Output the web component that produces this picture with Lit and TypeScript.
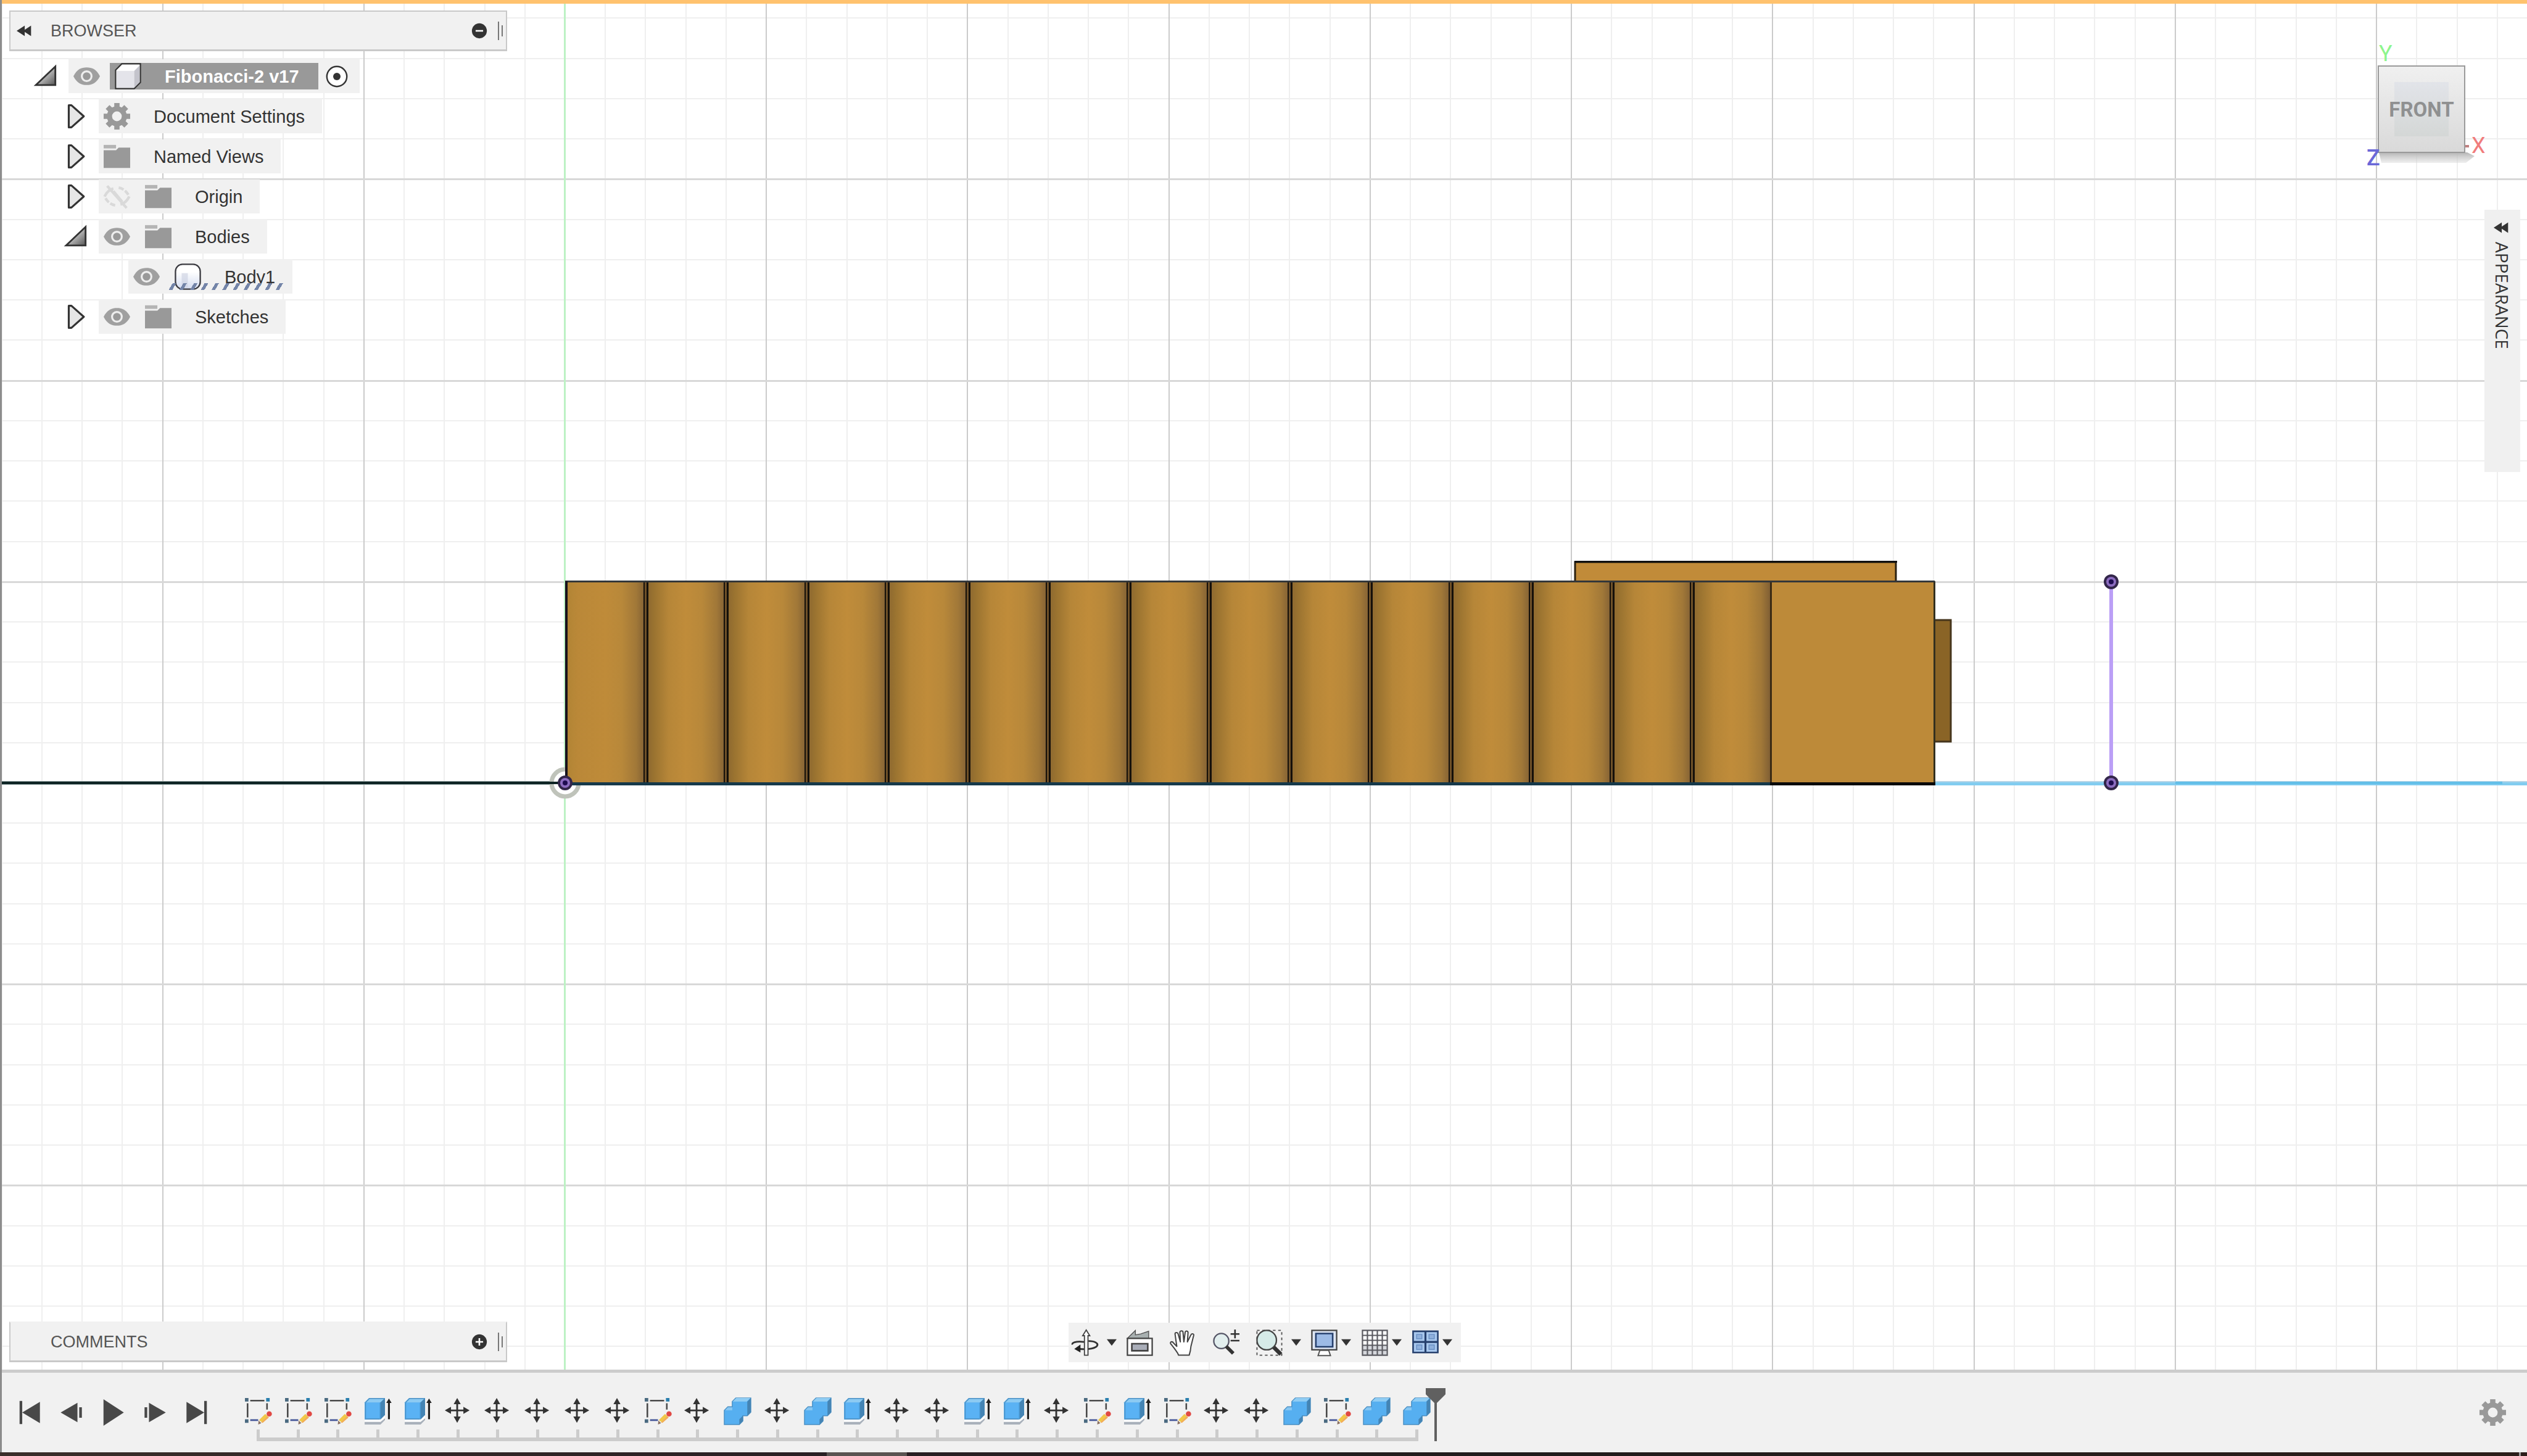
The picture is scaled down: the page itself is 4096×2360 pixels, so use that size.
import { LitElement, html, svg, css, nothing } from "lit";
import { customElement, state } from "lit/decorators.js";

type Glyph = ReturnType<typeof svg>;

/* ---------- icon artwork, drawn on a 30 x 30 board ---------- */

const gear = svg`
  <path fill="#999" fill-rule="evenodd" d="M12 0h6v4l2.500 1 2.800-2.800 4.400 4.400L24.900 9.500l1 2.500H30v6h-4l-1.100 2.500 2.800 2.900-4.300 4.300-2.900-2.800L18 26v4h-6v-4l-2.500-1.100-2.900 2.800-4.300-4.300 2.800-2.900L4 18H0v-6h4l1.100-2.500L2.300 6.600l4.300-4.300L9.500 5 12 4zM15 9.500a5.500 5.500 0 1 0 0 11 5.500 5.500 0 0 0 0-11z"/>`;

const folder = svg`
  <path fill="#b4b4b4" d="M0 2h14v4H0z"/>
  <path fill="#999" d="M0 8h14l3-3h13v23H0z"/>`;

const eye = svg`
  <path fill="#a0a0a0" d="M0 15C4 7 9 5 15 5s11 2 15 10c-4 8-9 10-15 10S4 23 0 15z"/>
  <circle cx="15" cy="15" r="5.500" fill="#999" stroke="#eee" stroke-width="2.200"/>`;

const eyeOff = svg`
  <g fill="none" stroke="#d9d9d9" stroke-width="3">
    <path d="M1 15c3-6 6-8 10-9M29 15c-3 6-6 8-10 9"/>
    <path d="M17 5c5 1 9 4 12 10M13 25C8 24 4 21 1 15" stroke-dasharray="6 2"/>
    <path d="M4 3l22 25M11 9l10 12"/>
  </g>`;

const component = svg`
  <path d="M1 8 8 1h21v21l-7 7H1z" fill="#fff" stroke="#333" stroke-width="1.500"/>
  <path d="M2 9h20v19H2z" fill="#e4e4ea"/>
  <path d="M22 9l6-6v19l-6 6z" fill="#c4c4cc"/>`;

const bodyIcon = svg`
  <defs><linearGradient id="bodyFill" x1="0" x2="0" y1="0" y2="1">
    <stop offset=".3" stop-color="#fff"/><stop offset="1" stop-color="#d4dcf0"/>
  </linearGradient></defs>
  <rect x="1" y="1" width="28" height="28" rx="8" fill="url(#bodyFill)" stroke="#3a3a40" stroke-width="1.600"/>
  <path d="M8 11h7v16H8z" fill="#c9cfdf" opacity=".6"/>`;

const triClosed = svg`<path d="M8 2.500h3L25 15 11 27.500H8z" fill="#e6e6e6" stroke="#333" stroke-width="2.200" stroke-linejoin="round"/>`;
const triOpen = svg`
  <defs><linearGradient id="tri" x1="0" x2="1" y1="0" y2="1">
    <stop offset=".3" stop-color="#ddd"/><stop offset="1" stop-color="#555"/>
  </linearGradient></defs>
  <path d="M27 4v21H5z" fill="url(#tri)" stroke="#333" stroke-width="2"/>`;

const rewind = svg`<path d="M0 15 14 6v7l11-7v18l-11-7v7z" fill="#333"/>`;
const minus = svg`<circle cx="15" cy="15" r="14" fill="#333"/><path d="M8 15h14" stroke="#fff" stroke-width="3"/>`;
const plus = svg`<circle cx="15" cy="15" r="14" fill="#333"/><path d="M8 15h14M15 8v14" stroke="#fff" stroke-width="3"/>`;
const radioOn = svg`<circle cx="15" cy="15" r="13.500" fill="#fff" stroke="#333" stroke-width="2"/><circle cx="15" cy="15" r="5" fill="#333"/>`;

const sketch = svg`
  <g fill="#4a6a80"><path d="M0 0h4v4H0zM0 24h4v4H0z"/><path fill="#2a7fae" d="M24 0h4v4h-4z"/></g>
  <path d="M6 3h16M3 6v16M25 6v7" stroke="#4a4a4a" stroke-width="1.800" fill="none"/>
  <path d="M6 25h9" stroke="#4a5a9a" stroke-width="2"/>
  <path d="M16 25l7-7 4 4-7 6z" fill="#f0c848"/>
  <path d="M20 28l7-6-1.500-1.500-7 7z" fill="#f2ab5c"/>
  <path d="M15.500 25.500l3 3-3.500 1.500z" fill="#8a7060"/>
  <circle cx="27.500" cy="18" r="3" fill="#e04a44"/>`;

const extrude = svg`
  <path d="M0 5 5 0h18v19l-5 5H0z" fill="#4a9cd8"/>
  <path d="M0 5h17v19H0z" fill="#5ab2f4"/>
  <path d="M0 5 5 0h18l-5 5z" fill="#8ccaf2"/>
  <path d="M18 5l5-5v19l-5 5z" fill="#4484b4"/>
  <path d="M1 5v18.500h16M1 5l4.500-4.500H22.500" fill="none" stroke="#4a90c4"/>
  <path d="M0 25h18l5-5v3l-5 4H0z" fill="#fff"/>
  <path d="M0 27h18l5-4v2l-5 5H0z" fill="#a9b1bb"/>
  <path d="M27.500 4v20" stroke="#222" stroke-width="2.200"/><path d="M24.500 5.500l3-5 3 5z" fill="#222"/>`;

const move = svg`
  <path d="M14 4v20M4 14h20" stroke="#333" stroke-width="2"/>
  <path fill="#333" d="M14 0l4 7h-8zM14 28l4-7h-8zM0 14l7-4v8zM28 14l-7-4v8z"/>`;

const combine = svg`
  <path d="M9 4l4-4h17v16l-4 4h-5v6l-4 4H0V14l4-4h5z" fill="#56aff0" stroke="#4a90c4"/>
  <path d="M9.500 4l4-4H29.500l-4 4z" fill="#90cdf4"/>
  <path d="M26 4l4-4v16l-4 4zM17 24l4-4v6l-4 4z" fill="#4484b4"/>
  <path d="M1 14l3-3.500h5V14z" fill="#86c6f2"/>`;

const skipStart = svg`<path d="M4 2h3v26H4zM27 3v24L7 15z" fill="#484848"/>`;
const stepBack = svg`<path d="M22 4v22L3 15zM24 9h3v12h-3z" fill="#484848"/>`;
const play = svg`<path d="M4 0v30l23-15z" fill="#484848"/>`;
const stepForward = svg`<path d="M8 4v22l19-11zM3 9h3v12H3z" fill="#484848"/>`;
const skipEnd = svg`<path d="M23 2h3v26h-3zM3 3v24l20-12z" fill="#484848"/>`;

const orbit = svg`
  <path d="M14 14C4 13 0 15 1 17M19 13c8 0 11 3 10 5-1 3-10 5-20 4" fill="none" stroke="#333" stroke-width="2"/>
  <path d="M3 22l7-5v9z" fill="#222"/>
  <path d="M14.500 7v22h4V7h2l-4-6.500L12.500 7z" fill="#fff" stroke="#444" stroke-width="1.300"/>`;

const lookAt = svg`
  <path d="M1 10 10 1v5l6-1 9-3v8z" fill="#a8b0b0" stroke="#555"/>
  <path d="M1 10h28v19H1z" fill="#fff" stroke="#444" stroke-width="1.600"/>
  <path d="M6 16h18v8H6z" fill="#a9adb8" stroke="#444" stroke-width="1.800"/>`;

const hand = svg`
  <path d="M10 29c-1-3-3-5-5-8L1 16c-1-2 2-3 3-1l4 4L6 5c0-2 3-2 3.500 0L12 14 11.500 3c0-2 3.500-2 3.500 0l1 11 1.500-11c.3-2 3.300-1.500 3.200.5L20 14l4-8c1-2 4-1 3 1l-3 12c-.3 4-1 7-2 10z" fill="#fff" stroke="#444" stroke-width="1.400" stroke-linejoin="round"/>`;

const zoom = svg`
  <circle cx="9.500" cy="13" r="8.500" fill="#e2eeee" stroke="#556" stroke-width="1.600"/>
  <path d="M15 19l8 8" stroke="#333" stroke-width="4"/>
  <path d="M25 0v10M20 5h10M20 12.500h10" stroke="#333" stroke-width="1.800"/>`;

const fit = svg`
  <path d="M1 1h28v28H1z" fill="none" stroke="#555" stroke-width="1.300" stroke-dasharray="3 3"/>
  <circle cx="12" cy="12" r="11" fill="#d6ebe8" stroke="#444" stroke-width="1.600"/>
  <path d="M20 20l8 8" stroke="#333" stroke-width="4.500"/>`;

const display = svg`
  <path d="M1 1h28v22H1z" fill="#dfe7f4" stroke="#444" stroke-width="1.600"/>
  <path d="M5.500 4.500h19v15h-19z" fill="#9dbbe6" stroke="#26406e" stroke-width="1.800"/>
  <path d="M10 23.500h10l2 6H8z" fill="#fff" stroke="#555" stroke-width="1.400"/>`;

const gridIcon = svg`
  <path d="M1 1h28v28H1z" fill="#fff"/><path d="M1 18h28v11H1z" fill="#d5d7dc"/>
  <path d="M1 1h28v28H1zM6.600 1v28M12.200 1v28M17.800 1v28M23.400 1v28M1 6.600h28M1 12.200h28M1 17.800h28M1 23.400h28" fill="none" stroke="#5a5a60" stroke-width="1.500"/>`;

const viewports = svg`
  <path d="M1 2h28v24H1z" fill="#a9c8ee" stroke="#26406e" stroke-width="1.800"/>
  <path d="M15 2v24M1 14h28" stroke="#26406e" stroke-width="2.200"/>
  <path d="M5 5.500h6v5H5zM19 5.500h6v5h-6zM5 17.500h6v5H5zM19 17.500h6v5h-6z" fill="#8fb0dc" stroke="#6a90c4"/>`;

const caret = svg`<path d="M0 5h30L15 25z" fill="#333"/>`;

const icon = (art: Glyph, cls = "icon") =>
  html`<svg class=${cls} viewBox="0 0 30 30" aria-hidden="true">${art}</svg>`;

/* ---------- data ---------- */

interface Node {
  label: string;
  level: number;
  toggle?: "open" | "closed";
  eye?: "on" | "off";
  art: Glyph;
  root?: boolean;
  hatched?: boolean;
}

const TREE: Node[] = [
  { label: "Fibonacci-2 v17", level: 0, toggle: "open", eye: "on", art: component, root: true },
  { label: "Document Settings", level: 1, toggle: "closed", art: gear },
  { label: "Named Views", level: 1, toggle: "closed", art: folder },
  { label: "Origin", level: 1, toggle: "closed", eye: "off", art: folder },
  { label: "Bodies", level: 1, toggle: "open", eye: "on", art: folder },
  { label: "Body1", level: 2, eye: "on", art: bodyIcon, hatched: true },
  { label: "Sketches", level: 1, toggle: "closed", eye: "on", art: folder },
];

const FEATURES: Record<string, { name: string; art: Glyph }> = {
  S: { name: "Sketch", art: sketch },
  E: { name: "Extrude", art: extrude },
  M: { name: "Move", art: move },
  C: { name: "Combine", art: combine },
};
const HISTORY = [..."SSSEEMMMMMSMCMCEMMEEMSESMMCSCC"];

const PLAYBACK = [
  { name: "Go to start", art: skipStart },
  { name: "Step back", art: stepBack },
  { name: "Play", art: play },
  { name: "Step forward", art: stepForward },
  { name: "Go to end", art: skipEnd },
];

const NAVIGATION = [
  { name: "Orbit", art: orbit, menu: "far" },
  { name: "Look at", art: lookAt, menu: "" },
  { name: "Pan", art: hand, menu: "" },
  { name: "Zoom", art: zoom, menu: "" },
  { name: "Fit", art: fit, menu: "far" },
  { name: "Display settings", art: display, menu: "near" },
  { name: "Grid and snaps", art: gridIcon, menu: "near" },
  { name: "Viewports", art: viewports, menu: "near" },
];

/* ---------- modelling canvas ---------- */

@customElement("model-canvas")
export class ModelCanvas extends LitElement {
  static styles = css`
    :host { display: block; min-width: 0; min-height: 0; overflow: hidden; }
    .scene { display: block; width: 100%; height: 100%; }
  `;

  private gridLines() {
    const ox = 916, oy = 1269, step = 326.24 / 5;
    const out: Glyph[] = [];
    const majors: Glyph[] = [];
    for (let i = -14; i <= 48; i++) {
      const x = Math.round(ox + i * step);
      const major = i % 5 === 0;
      (major ? majors : out).push(
        svg`<rect x=${x - 1} y="0" width="2" height="2220" fill=${major ? "#cbcbcb" : "#efefef"}/>`);
    }
    for (let j = -19; j <= 14; j++) {
      const y = Math.round(oy + j * step);
      const major = j % 5 === 0;
      (major ? majors : out).push(
        svg`<rect x="0" y=${y - 1} width="4096" height=${major ? 3 : 2} fill=${major ? "#d8d8d8" : "#efefef"}/>`);
    }
    return [out, majors];
  }

  private ribs() {
    const out: Glyph[] = [];
    for (let k = 0; k < 15; k++) {
      const x = Math.round(916 + k * 130.5);
      const end = k === 14 ? 2870 : Math.round(916 + (k + 1) * 130.5);
      out.push(svg`<rect x=${x} y="943" width=${end - x} height="327" fill=${k ? "url(#rib)" : "url(#ribFirst)"}/>`);
    }
    for (let k = 1; k < 15; k++) {
      const x = Math.round(916 + k * 130.5);
      out.push(svg`<rect x=${x - 3} y="943" width="6" height="327" fill="#6e5028"/>
        <rect x=${x - 4} y="943" width="2" height="327" fill="#15100a"/>
        <rect x=${x + 1} y="943" width="3" height="327" fill="#15100a"/>`);
    }
    return out;
  }

  private point(x: number, y: number) {
    return svg`<circle cx=${x} cy=${y} r="12" fill="#33264a"/>
      <circle cx=${x} cy=${y} r="8" fill="#8c6cc0"/>
      <circle cx=${x} cy=${y} r="4" fill="#1e0c50"/>`;
  }

  render() {
    return html`<svg class="scene" viewBox="3 6 4093 2214" preserveAspectRatio="xMidYMid slice" role="img" aria-label="Front view of the model">
      <defs>
        <linearGradient id="rib">
          <stop offset="0" stop-color="#8a6630"/><stop offset=".1" stop-color="#9a7330"/>
          <stop offset=".28" stop-color="#b68638"/><stop offset=".5" stop-color="#c08c3a"/>
          <stop offset=".7" stop-color="#b8883a"/><stop offset=".88" stop-color="#a17838"/>
          <stop offset="1" stop-color="#7f5e34"/>
        </linearGradient>
        <linearGradient id="ribFirst">
          <stop offset="0" stop-color="#b08434"/><stop offset=".15" stop-color="#ba8838"/>
          <stop offset=".5" stop-color="#bf8b39"/><stop offset=".7" stop-color="#b8883a"/>
          <stop offset=".88" stop-color="#a17838"/><stop offset="1" stop-color="#7f5e34"/>
        </linearGradient>
      </defs>
      <rect width="4096" height="2220" fill="#fff"/>
      ${this.gridLines()}
      <rect x="914" y="0" width="3" height="2220" fill="#bdf2c4"/>
      <rect x="0" y="1266" width="916" height="6" fill="#8a9c9c"/>
      <rect x="3136" y="1266" width="960" height="7" fill="#b4d4e6"/>
      <rect x="3136" y="1268" width="960" height="5" fill="#82ccf0"/>
      <rect x="3526" y="1267" width="530" height="4" fill="#62bfe8"/>
      <circle cx="916" cy="1269" r="22" fill="#fff" stroke="#bfc3ba" stroke-width="7"/>
      <rect x="0" y="1267" width="916" height="4" fill="#0e2424"/>
      <rect x="2553" y="911" width="520" height="32" fill="#c18b39" stroke="#2a2010" stroke-width="3"/>
      <rect x="2552" y="909" width="523" height="3" fill="#111"/>
      <rect x="3135" y="1005" width="27" height="197" fill="#8a6426" stroke="#45351c" stroke-width="3"/>
      ${this.ribs()}
      <rect x="2870" y="943" width="266" height="327" fill="#bd8a39"/>
      <rect x="2869" y="943" width="3" height="327" fill="#3a2a14"/>
      <rect x="3134" y="942" width="3" height="330" fill="#33301f"/>
      <rect x="916" y="941" width="2220" height="3" fill="#33373a"/>
      <rect x="916" y="942" width="4" height="328" fill="#17121c"/>
      <rect x="916" y="1268" width="1954" height="5" fill="#16394a"/>
      <rect x="2869" y="1268" width="268" height="5" fill="#0a0a0a"/>
      <rect x="3419" y="942" width="6" height="327" fill="#bb9ff6"/>
      ${this.point(916, 1269)} ${this.point(3422, 943)} ${this.point(3422, 1269)}
    </svg>`;
  }
}

/* ---------- application ---------- */

@customElement("app-root")
export class AppRoot extends LitElement {
  @state() private selected = TREE[0].label;

  static styles = css`
    :host {
      display: block; height: 100vh; color: #333;
      font-family: "Liberation Sans", Arial, sans-serif; font-size: 29px; line-height: 32px;
    }
    * { box-sizing: border-box; }
    button { all: unset; box-sizing: border-box; display: flex; align-items: center; cursor: pointer; }
    .icon { display: block; flex: none; width: 43px; height: 43px; overflow: visible; }
    .shell { display: flex; flex-direction: column; height: 100%; border-left: 3px solid #8c8c8c; background: #f1f1f1; }

    .viewport { flex: 1; min-height: 0; display: grid; grid-template: minmax(0, 1fr) / minmax(0, 1fr); border-top: 6px solid #ffc26e; }
    .viewport > * { grid-area: 1 / 1; }
    .chrome { z-index: 1; display: grid; grid-template: 1fr auto / 1fr auto 1fr; padding: 11px 11px 12px 12px; pointer-events: none; }
    .chrome button { pointer-events: auto; }
    .left { grid-area: 1 / 1; }
    .right { grid-area: 1 / 3; display: flex; flex-direction: column; align-items: flex-end; }

    .panel { display: flex; align-items: center; width: 807px; height: 66px; padding: 0 5px 0 10px; background: #f1f1f1; border: 2px solid #c9c9c9; border-bottom-width: 3px; font-size: 27px; color: #555; }
    .panel.flat { border-top-color: #f1f1f1; align-self: end; grid-area: 2 / 1; }
    .panel .name { flex: 1; margin: 0; font-size: 27px; font-weight: 400; }
    .lead { width: 55px; }
    .small { width: 28px; height: 28px; }
    .round { display: block; width: 26px; height: 26px; margin-right: 17px; }
    .grip { width: 8px; height: 30px; border-left: 2px solid #777; display: flex; align-items: center; justify-content: flex-end; }
    .grip::after { content: ""; width: 2px; height: 18px; background: #777; }

    .tree { list-style: none; margin: 0; padding: 13px 0 0 35px; display: flex; flex-direction: column; gap: 10px; }
    .row { display: flex; align-items: center; height: 55px; }
    .level1 { padding-left: 49px; }
    .level2 { padding-left: 97px; }
    .toggle { width: 61px; flex: none; padding-left: 1px; }
    .arrow { display: block; width: 43px; height: 43px; }
    .chip { display: flex; align-items: center; height: 55px; background: #f1f1f1; }
    .eye { padding-left: 8px; margin-right: 16px; }
    .entry { height: 43px; padding: 0 28px 0 8px; gap: 38px; white-space: nowrap; }
    .root .entry { background: #999; color: #fff; font-weight: 700; padding-right: 31px; }
    .activate { padding: 0 19px 0 12px; }
    .dot { display: block; width: 36px; height: 36px; }
    .hatched .entry { position: relative; }
    .hatched .entry::after {
      content: ""; position: absolute; left: -2px; right: 10px; bottom: 0; height: 11px;
      background: repeating-linear-gradient(-60deg, transparent 0 10px, #7384a8 10px 15px);
    }

    .cube { display: block; width: 210px; height: 240px; margin: 23px 53px 0 0; }
    .cube svg { display: block; width: 100%; height: 100%; }
    .cube text { font-family: Roboto, "Liberation Sans", sans-serif; }
    .drawer { display: flex; flex-direction: column; align-items: center; width: 58px; height: 425px; margin-top: 60px; padding-top: 15px; gap: 9px; background: #f0f0f0; font-family: "Open Sans", sans-serif; font-size: 28px; line-height: 32px; }
    .drawer .text { writing-mode: vertical-rl; }

    .nav { grid-area: 2 / 2; align-self: end; display: flex; align-items: center; gap: 27px; height: 64px; padding: 0 14px 0 5px; background: #f1f1f1; }
    .far { gap: 14px; margin-right: -11px; }
    .near { gap: 6px; margin-right: -10px; }
    .near:last-child { margin-right: 0; }
    .caret { display: block; width: 16px; height: 16px; }

    .timeline { display: flex; align-items: center; height: 134px; flex: none; border-top: 5px solid #ccc; padding: 0 34px 0 23px; }
    .playback { display: flex; gap: 25px; }
    .track { position: relative; align-self: flex-start; width: 1943px; margin: 41px 0 0 45px; }
    .steps { display: grid; grid-template-columns: repeat(30, 1fr); list-style: none; margin: 0; padding: 0; }
    .step { display: flex; flex-direction: column; align-items: center; gap: 8px; }
    .step::after { content: ""; width: 5px; height: 13px; background: #ccc; }
    .rail { height: 6px; margin: 0 30px; background: #ccc; }
    .marker { position: absolute; right: -14px; top: -16px; width: 32px; height: 86px; }
    .settings { margin-left: auto; }
    .taskbar { flex: none; height: 6px; margin-left: -3px; display: flex; background: linear-gradient(90deg, #3a2e2a, #2a2024 32%, #201c1c 60%, #2c1e1a); }
    .active { width: 130px; margin-left: 1340px; background: #5a5452; }
    .peek { width: 3px; margin: 0 10px 0 auto; background: #999; }
  `;

  private row(n: Node) {
    return html`<li class="row level${n.level} ${n.root ? "root" : ""} ${n.hatched ? "hatched" : ""}">
      ${n.toggle
        ? html`<button class="toggle" aria-label="Toggle ${n.label}" aria-expanded=${n.toggle === "open"}>${icon(n.toggle === "open" ? triOpen : triClosed, "arrow")}</button>`
        : html`<span class="toggle"></span>`}
      <div class="chip">
        ${n.eye ? html`<button class="eye" aria-label="Visibility of ${n.label}">${icon(n.eye === "on" ? eye : eyeOff)}</button>` : nothing}
        <button class="entry" @click=${() => (this.selected = n.label)} aria-current=${this.selected === n.label}>${icon(n.art)}<span>${n.label}</span></button>
        ${n.root ? html`<button class="activate" aria-label="Activate component">${icon(radioOn, "dot")}</button>` : nothing}
      </div>
    </li>`;
  }

  private viewCube() {
    return html`<button class="cube" aria-label="View cube">
      <svg viewBox="0 -30 210 240">
        <defs>
          <linearGradient id="face" x1="0" x2="0" y1="0" y2="1"><stop offset="0" stop-color="#f0f0f0"/><stop offset="1" stop-color="#d9d9d9"/></linearGradient>
          <linearGradient id="inner" x1="0" x2="0" y1="0" y2="1"><stop offset="0" stop-color="#e2e4e9"/><stop offset="1" stop-color="#d4d7d6"/></linearGradient>
          <linearGradient id="shade" x1="0" x2="0" y1="0" y2="1"><stop offset="0" stop-color="#b4b4b4"/><stop offset="1" stop-color="#d4d4d4" stop-opacity=".4"/></linearGradient>
        </defs>
        <path d="M34 177h143l12 6-14 11H38z" fill="url(#shade)"/>
        <text x="34" y="29" font-size="36" fill="#8df58d">Y</text>
        <rect x="33" y="37" width="140" height="140" fill="url(#face)" stroke="#9a9a9a" stroke-width="2"/>
        <rect x="59" y="63" width="88" height="88" fill="url(#inner)"/>
        <text x="103" y="119" font-size="33" font-weight="700" fill="#8f9091" text-anchor="middle">FRONT</text>
        <path d="M174 167h6" stroke="#c08080" stroke-width="4"/>
        <text x="184" y="178" font-size="36" fill="#f07c7c">X</text>
        <text x="14" y="198" font-size="36" font-weight="500" fill="#6a68d8">Z</text>
      </svg>
    </button>`;
  }

  render() {
    return html`<div class="shell">
      <main class="viewport">
        <model-canvas></model-canvas>
        <div class="chrome">
          <div class="left">
            <header class="panel">
              <button class="lead" aria-label="Collapse browser">${icon(rewind, "small")}</button>
              <h2 class="name">BROWSER</h2>
              <button aria-label="Minimise">${icon(minus, "round")}</button>
              <span class="grip"></span>
            </header>
            <ul class="tree">${TREE.map((n) => this.row(n))}</ul>
          </div>
          <div class="right">
            ${this.viewCube()}
            <button class="drawer">${icon(rewind, "small")}<span class="text">APPEARANCE</span></button>
          </div>
          <section class="panel flat">
            <span class="lead"></span>
            <h2 class="name">COMMENTS</h2>
            <button aria-label="Add comment">${icon(plus, "round")}</button>
            <span class="grip"></span>
          </section>
          <nav class="nav">
            ${NAVIGATION.map((t) => html`<button class=${t.menu} aria-label=${t.name}>${icon(t.art)}${t.menu ? icon(caret, "caret") : nothing}</button>`)}
          </nav>
        </div>
      </main>
      <footer class="timeline">
        <div class="playback">${PLAYBACK.map((p) => html`<button aria-label=${p.name}>${icon(p.art)}</button>`)}</div>
        <div class="track">
          <ol class="steps">
            ${HISTORY.map((k) => html`<li class="step"><button aria-label=${FEATURES[k].name}>${icon(FEATURES[k].art)}</button></li>`)}
          </ol>
          <div class="rail"></div>
          <svg class="marker" viewBox="0 0 32 86" aria-hidden="true"><path d="M0 0h32v10L18 24v62h-4V24L0 10z" fill="#606060"/></svg>
        </div>
        <button class="settings" aria-label="Timeline settings">${icon(gear)}</button>
      </footer>
      <div class="taskbar"><span class="active"></span><span class="peek"></span></div>
    </div>`;
  }
}
